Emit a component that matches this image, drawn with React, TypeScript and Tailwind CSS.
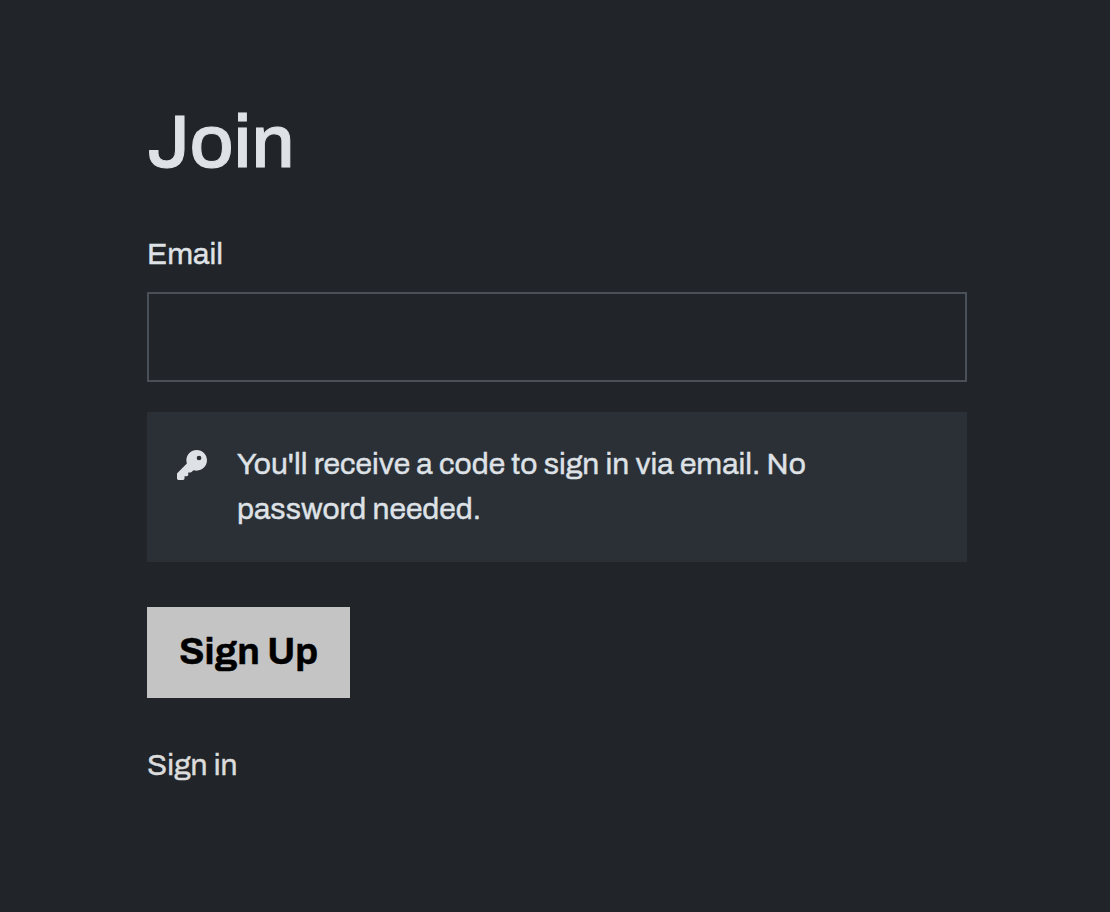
import { useState } from "react";
import { FaKey } from "react-icons/fa6";

export default function App() {
  const [email, setEmail] = useState("");

  return (
    <main className="min-h-screen bg-[#212429] px-[147px] pt-[97px] font-['Archivo','Liberation_Sans',Arial,sans-serif] text-[30px] leading-[45px] text-[#dee2e6] antialiased [-webkit-text-stroke:0.4px_currentColor]">
      <form className="w-[820px]" onSubmit={(e) => e.preventDefault()}>
        <h1 className="text-[75px] leading-[90px] font-medium [-webkit-text-stroke:1px_currentColor]">
          Join
        </h1>

        <label htmlFor="email" className="mt-[45px] block w-fit">
          Email
        </label>
        <input
          id="email"
          type="email"
          value={email}
          onChange={(e) => setEmail(e.target.value)}
          className="mt-[15px] block h-[90px] w-full border-2 border-[#495057] bg-transparent px-[22px] outline-none"
        />

        <div className="mt-[30px] flex h-[150px] bg-[#2b2f36] py-[30px] pl-[30px]">
          <FaKey className="mt-[8px] size-[30px] shrink-0" />
          <p className="ml-[30px] w-[600px]">
            You'll receive a code to sign in via email. No password needed.
          </p>
        </div>

        <button
          type="submit"
          className="mt-[45px] block h-[91px] w-[203px] bg-[#c4c4c4] pb-[2px] text-[37.5px] font-bold text-black"
        >
          Sign Up
        </button>
      </form>

      <a href="#signin" className="mt-[45px] block w-fit text-[#dcdcdc]">
        Sign in
      </a>
    </main>
  );
}
